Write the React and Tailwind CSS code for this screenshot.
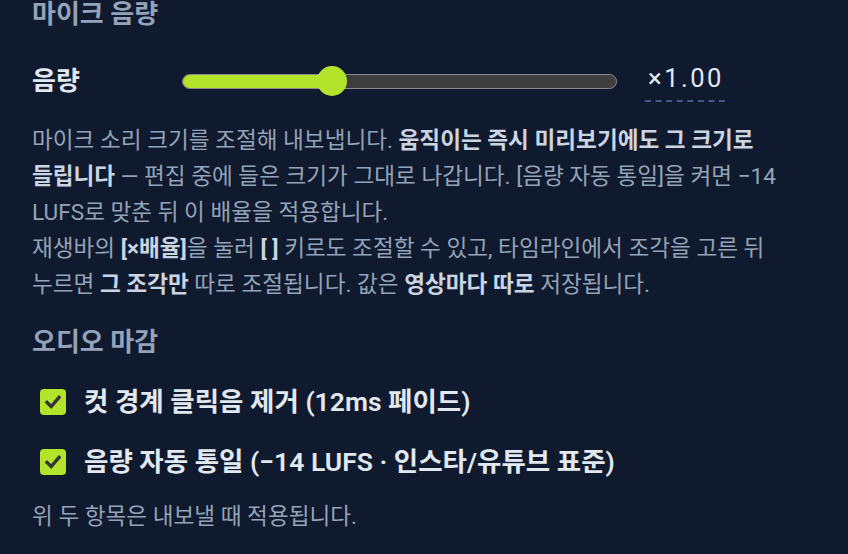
const font = { fontFamily: "Roboto, 'Noto Sans CJK KR', sans-serif" };

const Check = () => (
  <div className="w-[26px] h-[26px] rounded-[4px] bg-[#b4e32c] flex items-center justify-center shrink-0">
    <svg width="18" height="18" viewBox="0 0 18 18">
      <path d="M3 9.5 L7.2 13.5 L15 4.5" fill="none" stroke="#353535" strokeWidth="3.4" strokeLinecap="square" />
    </svg>
  </div>
);

export default function App() {
  const value = 1.0;
  const pct = (value / 2.9) * 100;
  return (
    <div style={font} className="w-[848px] h-[554px] bg-[#101a2e] px-8 overflow-hidden">
      <h2 className="text-[26px] leading-[30px] font-bold text-[#94a3b8] -mt-[1px]">마이크 음량</h2>

      <div className="flex items-center h-[40px] mt-[32px]">
        <div className="w-[150px] text-[26px] font-semibold text-[#e2e8f0]">음량</div>
        <div className="relative w-[435px] h-[15px] rounded-full border-[1.5px] border-[#8a8a8a] bg-[#3e3e3e]">
          <div className="h-full rounded-full bg-[#b4e32c]" style={{ width: pct + "%" }} />
          <div
            className="absolute top-1/2 -translate-y-1/2 -translate-x-1/2 w-[30px] h-[30px] rounded-full bg-[#b4e32c]"
            style={{ left: pct + "%" }}
          />
        </div>
        <div className="ml-[28px] flex flex-col items-center">
          <span className="text-[25.5px] leading-[30px] tracking-[2.5px] text-[#e2e8f0] pl-[2px] pt-[2px]">×1.00</span>
          <span className="w-[80px] border-b-2 border-dashed border-[#46578a] mt-[7px]" />
        </div>
      </div>

      <p className="mt-[22px] text-[22.6px] leading-[36px] text-[#94a3b8] break-keep">
        마이크 소리 크기를 조절해 내보냅니다.{" "}
        <b className="font-bold text-[#cbd5e1]">움직이는 즉시 미리보기에도 그 크기로 들립니다</b> — 편집 중에 들은 크기가
        그대로 나갑니다. [음량 자동 통일]을 켜면 −14 LUFS로 맞춘 뒤 이 배율을 적용합니다.
        <br />
        재생바의 <b className="font-bold text-[#cbd5e1]">[×배율]</b>을 눌러 <b className="font-bold text-[#cbd5e1]">[ ]</b> 키로도
        조절할 수 있고, 타임라인에서 조각을 고른 뒤 누르면 <b className="font-bold text-[#cbd5e1]">그 조각만</b> 따로
        조절됩니다. 값은 <b className="font-bold text-[#cbd5e1]">영상마다 따로</b> 저장됩니다.
      </p>

      <h2 className="mt-[24px] text-[26px] leading-[30px] font-bold text-[#94a3b8]">오디오 마감</h2>

      <div className="mt-[25px] flex flex-col gap-[20px] pl-[8px]">
        <label className="flex items-center gap-[18px] h-[40px]">
          <Check />
          <span className="text-[26.5px] font-semibold text-[#e2e8f0]">컷 경계 클릭음 제거 (12ms 페이드)</span>
        </label>
        <label className="flex items-center gap-[18px] h-[40px]">
          <Check />
          <span className="text-[26.5px] font-semibold text-[#e2e8f0]">음량 자동 통일 (−14 LUFS · 인스타/유튜브 표준)</span>
        </label>
      </div>

      <p className="mt-[17px] text-[22.6px] leading-[36px] text-[#94a3b8]">위 두 항목은 내보낼 때 적용됩니다.</p>
    </div>
  );
}
